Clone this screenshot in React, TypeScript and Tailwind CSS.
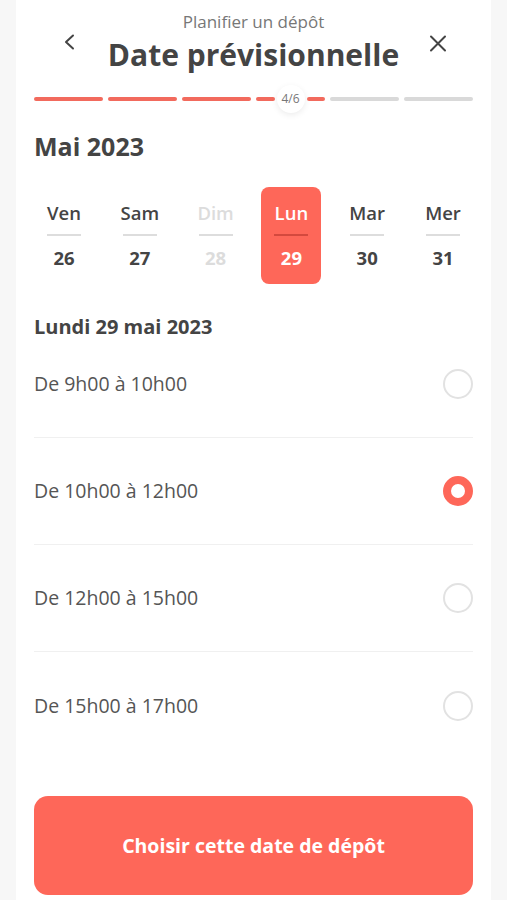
import React from "react";

const days = [
  { name: "Ven", num: "26" },
  { name: "Sam", num: "27" },
  { name: "Dim", num: "28", disabled: true },
  { name: "Lun", num: "29", selected: true },
  { name: "Mar", num: "30" },
  { name: "Mer", num: "31" },
];

const slots = [
  { label: "De 9h00 à 10h00" },
  { label: "De 10h00 à 12h00", checked: true },
  { label: "De 12h00 à 15h00" },
  { label: "De 15h00 à 17h00" },
];

function Progress() {
  return (
    <div className="mt-[13px] flex h-[28px] items-center gap-[5px]">
      <div className="h-[4px] flex-1 rounded-full bg-[#f26a5d]" />
      <div className="h-[4px] flex-1 rounded-full bg-[#f26a5d]" />
      <div className="h-[4px] flex-1 rounded-full bg-[#f26a5d]" />
      <div className="flex flex-1 items-center">
        <div className="h-[4px] flex-1 rounded-full bg-[#f26a5d]" />
        <div className="mx-[2px] flex h-[28px] w-[28px] items-center justify-center rounded-full bg-white text-[12px] text-[#777] shadow-[0_2px_6px_rgba(0,0,0,0.08)]">
          4/6
        </div>
        <div className="h-[4px] flex-1 rounded-full bg-[#f26a5d]" />
      </div>
      <div className="h-[4px] flex-1 rounded-full bg-[#d9d9d9]" />
      <div className="h-[4px] flex-1 rounded-full bg-[#d9d9d9]" />
    </div>
  );
}

export default function App() {
  return (
    <div className="flex min-h-screen justify-center bg-[#f7f7f7] font-['Open_Sans',sans-serif] text-[#444]">
      <div className="w-[475px] bg-white px-[18px] pb-[10px]">
        {/* header */}
        <div className="flex items-start pt-[12px]">
          <div className="flex w-[70px] justify-center pt-[22px]">
            <svg width="12" height="16" viewBox="0 0 12 16" fill="none">
              <path d="M10 1.5 L3 8 L10 14.5" stroke="#444" strokeWidth="2" strokeLinecap="round" strokeLinejoin="round" />
            </svg>
          </div>
          <div className="flex-1 text-center">
            <div className="text-[17px] leading-[20px] text-[#777]">Planifier un dépôt</div>
            <div className="mt-[6px] whitespace-nowrap text-[30px] font-bold leading-[34px] text-[#444]">
              Date prévisionnelle
            </div>
          </div>
          <div className="flex w-[70px] justify-center pt-[23px]">
            <svg width="18" height="17" viewBox="0 0 18 17" fill="none">
              <path d="M2 1.5 L16 15.5 M16 1.5 L2 15.5" stroke="#444" strokeWidth="2" strokeLinecap="round" />
            </svg>
          </div>
        </div>

        <Progress />

        <div className="mt-[18px] text-[25px] font-bold leading-[30px]">Mai 2023</div>

        {/* days */}
        <div className="mt-[26px] flex justify-between">
          {days.map((d) => (
            <div
              key={d.num}
              className={
                "flex h-[97px] w-[60px] flex-col items-center rounded-[8px] pt-[15px] " +
                (d.selected ? "bg-[#fe6759] text-white" : d.disabled ? "text-[#dcdcdc]" : "text-[#444]")
              }
            >
              <div className="text-[18.5px] font-semibold leading-[22px]">{d.name}</div>
              <div className={"mt-[10px] h-[2px] w-[34px] " + (d.selected ? "bg-[#d4493e]" : "bg-[#dddddd]")} />
              <div className="mt-[10px] text-[18.5px] font-bold leading-[24px]">{d.num}</div>
            </div>
          ))}
        </div>

        <div className="mt-[31px] text-[20px] font-bold leading-[24px]">Lundi 29 mai 2023</div>

        {/* slots */}
        <div className="-mt-[8px]">
          {slots.map((s, i) => (
            <div
              key={s.label}
              className={
                "flex h-[107px] items-center justify-between " +
                (i < slots.length - 1 ? "border-b border-[#f0f0f0]" : "")
              }
            >
              <span className="text-[19.5px] text-[#555]">{s.label}</span>
              {s.checked ? (
                <div className="h-[30px] w-[30px] rounded-full border-[8px] border-[#fe6759] bg-white" />
              ) : (
                <div className="h-[30px] w-[30px] rounded-full border-2 border-[#e2e2e2] bg-white" />
              )}
            </div>
          ))}
        </div>

        <button className="mt-[37px] flex h-[99px] w-full items-center justify-center rounded-[14px] bg-[#fe6759] text-[19.5px] font-bold text-white">
          Choisir cette date de dépôt
        </button>
      </div>
    </div>
  );
}
